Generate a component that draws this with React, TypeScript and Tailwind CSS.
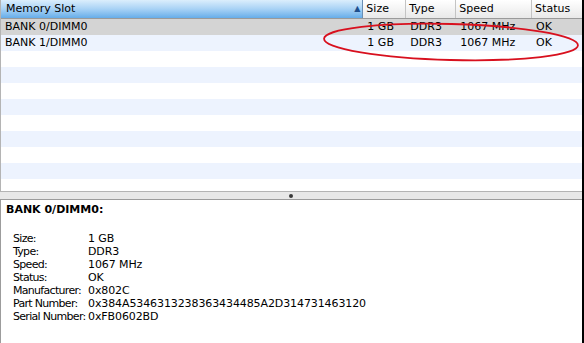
const cols = [
  { key: 'slot', label: 'Memory Slot', w: 'w-[363px]' },
  { key: 'size', label: 'Size', w: 'w-[43px]' },
  { key: 'type', label: 'Type', w: 'w-[50px]' },
  { key: 'speed', label: 'Speed', w: 'w-[76px]' },
  { key: 'status', label: 'Status', w: 'w-[50px]' },
];

const rows = [
  { slot: 'BANK 0/DIMM0', size: '1 GB', type: 'DDR3', speed: '1067 MHz', status: 'OK' },
  { slot: 'BANK 1/DIMM0', size: '1 GB', type: 'DDR3', speed: '1067 MHz', status: 'OK' },
];

const details = [
  ['Size:', '1 GB'],
  ['Type:', 'DDR3'],
  ['Speed:', '1067 MHz'],
  ['Status:', 'OK'],
  ['Manufacturer:', '0x802C'],
  ['Part Number:', '0x384A5346313238363434485A2D314731463120'],
  ['Serial Number:', '0xFB0602BD'],
];

function rowBg(i: number) {
  if (i === 0) return 'bg-[#d4d4d4]';
  return i % 2 === 1 ? 'bg-[#edf3fe]' : 'bg-white';
}

export default function App() {
  const filler = Array.from({ length: 11 }, (_, i) => i);

  return (
    <div className="relative flex w-[584px] h-[343px] overflow-hidden bg-white text-black text-[11px] font-['DejaVu_Sans',sans-serif]">
      <div className="flex flex-col w-[582px]">
        {/* table */}
        <div className="flex flex-col h-[192px] border-l border-b border-[#b4b4b4] overflow-hidden">
          <div className="flex h-[19px] shrink-0 border-b border-[#9a9a9a]">
            {cols.map((c, i) =>
              i === 0 ? (
                <div
                  key={c.key}
                  className={`${c.w} flex items-center justify-between pl-[5px] pr-[2px] bg-linear-to-b from-[#dbeefc] via-[#a8d2f5] to-[#66ade9] border-r border-[#6a8fb4]`}
                >
                  <span>{c.label}</span>
                  <span className="text-[8px] text-[#1e4f8c] leading-none">▲</span>
                </div>
              ) : (
                <div
                  key={c.key}
                  className={`${c.w} flex items-center pl-[3px] bg-linear-to-b from-white to-[#e9e9e9] ${i < cols.length - 1 ? 'border-r border-[#c4c4c4]' : ''}`}
                >
                  {c.label}
                </div>
              )
            )}
          </div>
          {filler.map((i) => {
            const r = rows[i];
            return (
              <div key={i} className={`flex h-[16px] shrink-0 items-center ${rowBg(i)}`}>
                {r && (
                  <>
                    <div className="w-[363px] pl-[4px]">{r.slot}</div>
                    <div className="w-[43px] pl-[4px]">{r.size}</div>
                    <div className="w-[50px] pl-[4px]">{r.type}</div>
                    <div className="w-[76px] pl-[4px]">{r.speed}</div>
                    <div className="w-[50px] pl-[4px]">{r.status}</div>
                  </>
                )}
              </div>
            );
          })}
        </div>

        {/* split bar */}
        <div className="flex h-[8px] shrink-0 items-center justify-center bg-[#e8e8e8] border-b border-[#9c9c9c]">
          <div className="w-[4px] h-[4px] rounded-full bg-[#3a3a3a]" />
        </div>

        {/* detail pane */}
        <div className="flex-1 flex flex-col border-l border-[#9c9c9c] pl-[5px] pt-[3px]">
          <div className="font-bold leading-[14px]">BANK 0/DIMM0:</div>
          <div className="mt-[15px] pl-[7px] flex flex-col">
            {details.map(([k, v]) => (
              <div key={k} className="flex leading-[13px] whitespace-nowrap">
                <span className="w-[75px] shrink-0 tracking-[-0.7px]">{k}</span>
                <span className="tracking-[-0.1px]">{v}</span>
              </div>
            ))}
          </div>
        </div>
      </div>
      <div className="w-[2px] bg-black" />

      {/* annotation */}
      <svg className="absolute left-0 top-0 pointer-events-none" width="584" height="343">
        <ellipse
          cx="451"
          cy="42"
          rx="127"
          ry="18"
          transform="rotate(1.5 451 42)"
          fill="none"
          stroke="#d8101e"
          strokeWidth="1.8"
        />
      </svg>
    </div>
  );
}
